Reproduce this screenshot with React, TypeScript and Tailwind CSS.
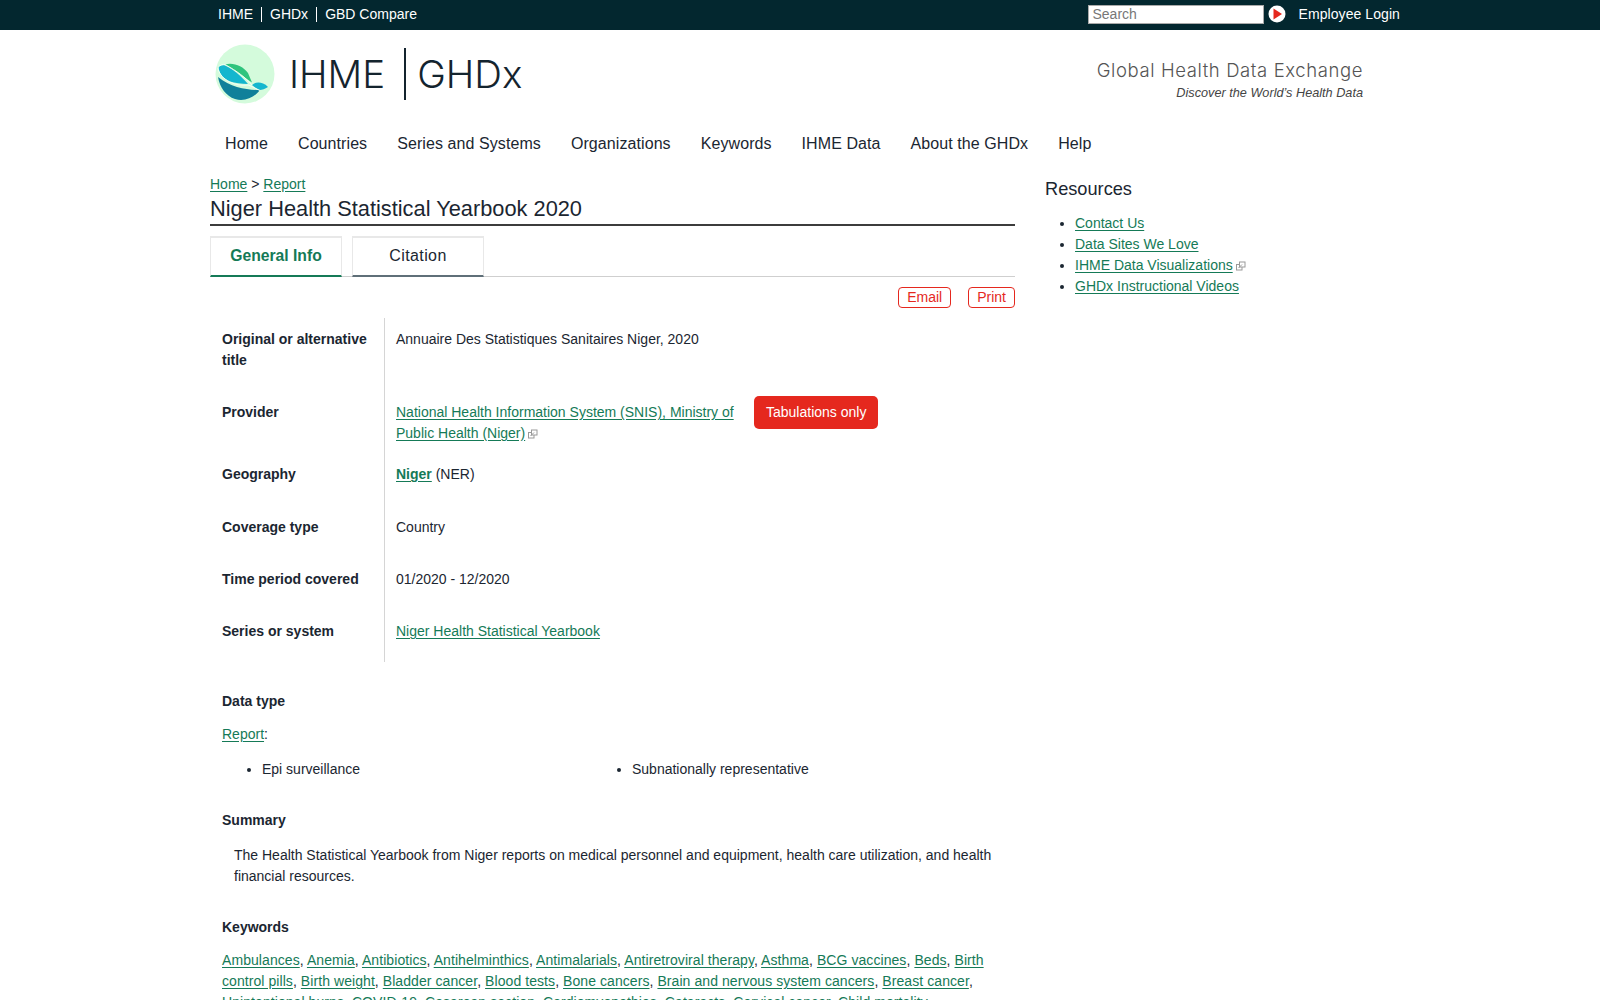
import { ReactNode } from "react";

const topLinks = ["IHME", "GHDx", "GBD Compare"];
const navItems = ["Home", "Countries", "Series and Systems", "Organizations", "Keywords", "IHME Data", "About the GHDx", "Help"];
const resources = ["Contact Us", "Data Sites We Love", "IHME Data Visualizations", "GHDx Instructional Videos"];
const keywords = [
  "Ambulances", "Anemia", "Antibiotics", "Antihelminthics", "Antimalarials", "Antiretroviral therapy", "Asthma",
  "BCG vaccines", "Beds", "Birth control pills", "Birth weight", "Bladder cancer", "Blood tests", "Bone cancers",
  "Brain and nervous system cancers", "Breast cancer", "Unintentional burns", "COVID-19", "Cesarean section",
  "Cardiomyopathies", "Cataracts", "Cervical cancer", "Child mortality",
];

function ExtIcon() {
  return (
    <svg viewBox="0 0 10 10" className="ml-[3px] inline-block h-[10px] w-[10px] align-[-1px]" fill="none" stroke="#9a9a9a" strokeWidth="1">
      <rect x="0.5" y="3.5" width="5.5" height="5.5" />
      <rect x="3.5" y="1" width="5.5" height="5" fill="#fff" />
      <path d="M2.5 7 L6 3.5" />
    </svg>
  );
}

function A({ children }: { children: ReactNode }) {
  return <a href="#" className="text-[#157a57] underline underline-offset-2">{children}</a>;
}

function Logo() {
  return (
    <svg viewBox="0 0 60 60" className="h-[60px] w-[60px] shrink-0">
      <circle cx="30" cy="30" r="29.5" fill="#d4fbdc" />
      <path d="M3 33 C5 44 11 52 20 55 C30 58 40 53 45 46 C33 46 16 44 3 33 Z" fill="#10809a" />
      <path d="M3.5 24 C3.5 22 6 21 10 21.5 C18 25 26 32 33 40 C26 40 20 39 15 37.5 C9 35 5 31 3.5 24 Z" fill="#14b6ce" />
      <path d="M10 20.5 C18 18 28 22 33 29 L37 38.5 C30 34 22 27 10 20.5 Z" fill="#2fc47d" />
      <path d="M37 41 C40 38 47 37 53 43 C50 45 47 46 45 46 C42 45 39 43 37 41 Z" fill="#14b6ce" />
      <path d="M3 24 C4 33 17 43 33 41 C37 42 41 45 45 46.5" fill="none" stroke="#f4fff7" strokeWidth="0.9" />
      <path d="M3 23.5 C5 21 8 20 10 20.5 C22 27 31 34 37 41" fill="none" stroke="#f4fff7" strokeWidth="0.9" />
    </svg>
  );
}

function Row({ label, pb, children }: { label: string; pb: string; children: ReactNode }) {
  return (
    <div className="flex">
      <div className={`w-[174px] shrink-0 pl-3 pr-3 pt-[11px] font-bold ${pb}`}>{label}</div>
      <div className={`flex-1 border-l border-[#d5d5d5] pl-[11px] pt-[11px] ${pb}`}>{children}</div>
    </div>
  );
}

export default function App() {
  return (
    <div className="min-h-screen bg-white font-['Liberation_Sans',sans-serif] text-[14px] leading-[21px] text-[#1b2631]">
      <div className="h-[30px] bg-[#03272f]">
        <div className="ml-[218px] flex h-full w-[1182px] items-center justify-between pb-[2px] text-[14px] text-white">
          <div className="flex items-center">
            {topLinks.map((t, i) => (
              <span key={t} className={i === 0 ? "pr-2" : "border-l border-white px-2 leading-[15px]"}>{t}</span>
            ))}
          </div>
          <div className="flex items-center">
            <div className="flex h-[19px] w-[176px] items-center border border-[#aaa] bg-white px-[3px] text-[14px] text-[#777]">Search</div>
            <svg viewBox="0 0 18 18" className="ml-[4px] h-[18px] w-[18px]">
              <circle cx="9" cy="9" r="8.5" fill="#fff" />
              <path d="M5.5 3.5 L14 9 L5.5 14.5 Z" fill="#e5281e" />
            </svg>
            <span className="ml-[12px] tracking-[0.08px]">Employee Login</span>
          </div>
        </div>
      </div>

      <div className="ml-[210px] w-[1153px]">
        <div className="flex h-[90px] items-center justify-between pl-[5px]">
          <div className="-mt-[2px] flex items-center">
            <Logo />
            <span className="ml-[14px] font-['Inter',sans-serif] text-[38.5px] font-light leading-none text-[#14242e]">IHME</span>
            <span className="ml-[19px] mr-[11px] h-[52px] w-[2px] bg-[#14242e]" />
            <span className="font-['Inter',sans-serif] text-[38.5px] font-light leading-none text-[#14242e]">GHDx</span>
          </div>
          <div className="pt-[10px] text-right">
            <div className="font-['Inter',sans-serif] text-[18.5px] font-light leading-[24px] tracking-[0.6px] text-[#555]">Global Health Data Exchange</div>
            <div className="mt-[2px] text-[12.7px] italic leading-[18px] text-[#444]">Discover the World’s Health Data</div>
          </div>
        </div>

        <nav className="mt-[8px] flex h-[30px] items-center text-[16px] tracking-[0.08px] text-[#1b2631]">
          {navItems.map((n) => (
            <span key={n} className="px-[15px]">{n}</span>
          ))}
        </nav>

        <div className="mt-[16px] flex">
          <main className="w-[805px] shrink-0">
            <div className="leading-[20px]"><A>Home</A> &gt; <A>Report</A></div>
            <h1 className="mt-[1px] border-b-2 border-[#3c3c3c] pb-[1px] text-[21.8px] font-normal leading-[28px]">Niger Health Statistical Yearbook 2020</h1>

            <div className="mt-[10px] flex gap-[10px] border-b border-[#cfcfcf]">
              <div className="-mb-px flex h-[41px] w-[132px] items-center justify-center border-x border-t-2 border-b-2 border-[#e8e8e8] border-b-[#157a57] pb-[2px] text-[15.7px] font-bold text-[#157a57]">General Info</div>
              <div className="-mb-px flex h-[41px] w-[132px] items-center justify-center border-x border-t-2 border-b-2 border-[#e8e8e8] border-b-[#5f6f78] pb-[2px] text-[16px] tracking-[0.4px]">Citation</div>
            </div>

            <div className="mt-[10px] flex justify-end gap-[17px] text-[#e5281e]">
              <span className="flex h-[21px] items-center rounded-[4px] border border-[#e5281e] px-2">Email</span>
              <span className="flex h-[21px] items-center rounded-[4px] border border-[#e5281e] px-2">Print</span>
            </div>

            <div className="mt-[10px]">
              <Row label="Original or alternative title" pb="pb-5">Annuaire Des Statistiques Sanitaires Niger, 2020</Row>
              <Row label="Provider" pb="pb-[9px]">
                <div className="flex items-start">
                  <div className="w-[345px] shrink-0"><A>National Health Information System (SNIS), Ministry of Public Health (Niger)</A><ExtIcon /></div>
                  <span className="-mt-[6px] ml-[13px] flex h-[33px] items-center rounded-[5px] bg-[#e5281e] px-3 text-white">Tabulations only</span>
                </div>
              </Row>
              <Row label="Geography" pb="pb-[21px]"><span className="font-bold"><A>Niger</A></span> (NER)</Row>
              <Row label="Coverage type" pb="pb-5">Country</Row>
              <Row label="Time period covered" pb="pb-5">01/2020 - 12/2020</Row>
              <Row label="Series or system" pb="pb-5"><A>Niger Health Statistical Yearbook</A></Row>
            </div>

            <div className="pl-3">
              <div className="mt-[29px] font-bold">Data type</div>
              <div className="mt-3"><A>Report</A>:</div>
              <ul className="mt-[14px] grid list-disc grid-cols-[370px_1fr] pl-10">
                <li>Epi surveillance</li>
                <li>Subnationally representative</li>
              </ul>
              <div className="mt-[30px] font-bold">Summary</div>
              <p className="mt-[14px] pl-3">The Health Statistical Yearbook from Niger reports on medical personnel and equipment, health care utilization, and health financial resources.</p>
              <div className="mt-[30px] font-bold">Keywords</div>
              <p className="mt-3 tracking-[0.07px]">
                {keywords.map((k, i) => (
                  <span key={k}><A>{k}</A>{i < keywords.length - 1 ? ", " : ""}</span>
                ))}
              </p>
            </div>
          </main>

          <aside className="ml-[30px] flex-1 pt-[4px]">
            <h2 className="text-[18.2px] font-normal leading-[22px]">Resources</h2>
            <ul className="mt-[13px] list-disc pl-[30px]">
              {resources.map((r, i) => (
                <li key={r}><A>{r}</A>{i === 2 && <ExtIcon />}</li>
              ))}
            </ul>
          </aside>
        </div>
      </div>
    </div>
  );
}
